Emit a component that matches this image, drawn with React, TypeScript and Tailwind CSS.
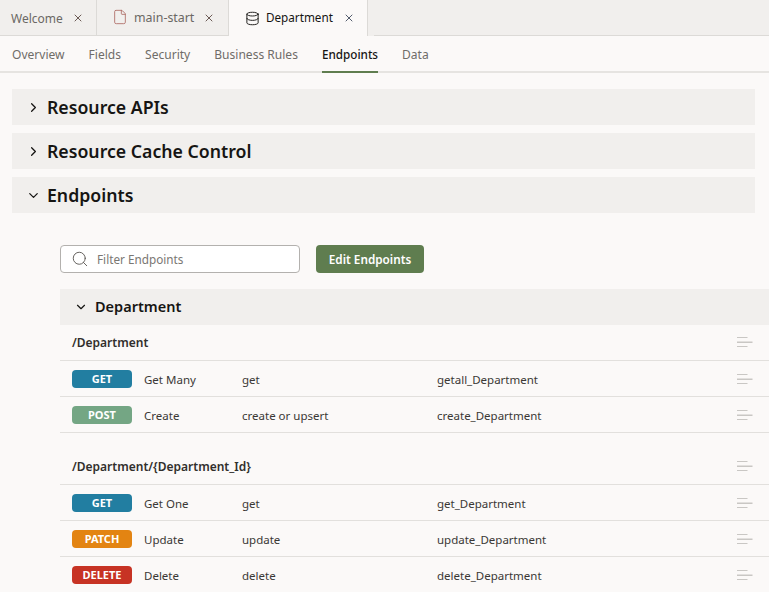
import React from 'react';
import { ChevronRight, ChevronDown, Search, X, Database, File } from 'lucide-react';

const subTabs = ['Overview', 'Fields', 'Security', 'Business Rules', 'Endpoints', 'Data'];

const badgeColors: Record<string, string> = {
  GET: 'bg-[#227ea1]',
  POST: 'bg-[#74a684]',
  PATCH: 'bg-[#e38412]',
  DELETE: 'bg-[#c73324]',
};

const groups = [
  {
    path: '/Department',
    rows: [
      { method: 'GET', label: 'Get Many', action: 'get', name: 'getall_Department' },
      { method: 'POST', label: 'Create', action: 'create or upsert', name: 'create_Department' },
    ],
  },
  {
    path: '/Department/{Department_Id}',
    rows: [
      { method: 'GET', label: 'Get One', action: 'get', name: 'get_Department' },
      { method: 'PATCH', label: 'Update', action: 'update', name: 'update_Department' },
      { method: 'DELETE', label: 'Delete', action: 'delete', name: 'delete_Department' },
    ],
  },
];

const MenuLines = ({ className = '' }: { className?: string }) => (
  <svg width="16" height="11" viewBox="0 0 16 11" className={`shrink-0 text-[#c9c7c4] ${className}`}>
    <rect x="0" y="0" width="10.5" height="1" fill="currentColor" />
    <rect x="0" y="4.5" width="15.5" height="1.5" fill="currentColor" />
    <rect x="0" y="9" width="10.5" height="1" fill="currentColor" />
  </svg>
);

const Section = ({ title, open }: { title: string; open?: boolean }) => (
  <div className="flex h-9 items-center bg-[#f1efed]">
    <div className="flex w-[35px] justify-end pr-[6px]">
      {open ? <ChevronDown size={15} strokeWidth={2} className="text-[#161513]" /> : <ChevronRight size={15} strokeWidth={2} className="text-[#161513]" />}
    </div>
    <span className="text-[17.7px] font-semibold text-[#161513]">{title}</span>
  </div>
);

export default function App() {
  return (
    <div className="h-[592px] w-[769px] overflow-hidden bg-[#fbf9f8] font-['Noto_Sans',sans-serif] text-[11.5px] text-[#3a3835]">
      <div className="flex h-9 bg-[#f1efed]">
        <div className="flex w-[97px] items-center border-r border-b border-[#dcdad7] pt-[3px] pl-[11px] text-[12px] text-[#6b6864]">
          Welcome
          <X size={12} strokeWidth={1.8} className="ml-[9px] -mt-[3px] text-[#5c4a44]" />
        </div>
        <div className="flex w-[131px] items-center border-b border-[#dcdad7] pt-px pl-[15px] text-[12.4px] text-[#6b6864]">
          <File size={16} strokeWidth={1.2} className="mr-[6px] -mt-[3px] text-[#a8615a]" />
          main-start
          <X size={12} strokeWidth={1.8} className="ml-[9px] text-[#5c4a44]" />
        </div>
        <div className="flex w-[140px] items-center border-x border-[#dcdad7] bg-[#fbf9f8] pl-[16px] text-[11.7px] text-[#161513]">
          <Database size={15} strokeWidth={1.5} className="mr-[6px]" />
          Department
          <X size={12} strokeWidth={1.8} className="ml-[10px] text-[#3f4a5c]" />
        </div>
        <div className="w-[6px]" />
        <div className="flex-1 border-b border-[#dcdad7]" />
      </div>

      <div className="flex h-[37px] gap-6 border-b-2 border-[#e6e4e1] px-3">
        {subTabs.map((t) => (
          <div
            key={t}
            className={
              t === 'Endpoints'
                ? 'flex h-[37px] items-center border-b-2 border-[#5f7d4f] pt-0.5 text-[11.7px] font-medium text-[#161513]'
                : 'flex h-[37px] items-center pt-px text-[12.05px] text-[#6f6c68]'
            }
          >
            {t}
          </div>
        ))}
      </div>

      <div className="box-content flex w-[743px] flex-col gap-2 pt-4 pl-3">
        <Section title="Resource APIs" />
        <Section title="Resource Cache Control" />
        <Section title="Endpoints" open />
      </div>

      <div className="pt-8 pl-[60px]">
        <div className="flex items-center gap-4">
          <div className="flex h-7 w-60 items-center rounded border border-[#b3b1ae] bg-white pl-[10px] text-[11.75px] text-[#7a7773]">
            <Search size={18} strokeWidth={1.2} className="mr-[8px] text-[#57544f]" />
            <span className="pt-px">Filter Endpoints</span>
          </div>
          <div className="flex h-7 w-[108px] items-center justify-center rounded bg-[#5f7d4f] pt-px text-[11.75px] font-semibold text-white">
            Edit Endpoints
          </div>
        </div>

        <div className="mt-4 flex h-9 items-center bg-[#f1efed] pl-[14px]">
          <ChevronDown size={14} strokeWidth={2} className="mr-[7px] text-[#161513]" />
          <span className="-mt-px text-[14.5px] font-semibold text-[#161513]">Department</span>
        </div>

        {groups.map((g, i) => (
          <div key={g.path} className={i > 0 ? 'mt-4' : ''}>
            <div className="flex h-9 items-center justify-between border-b border-[#e2e0dd] pr-4 pl-3">
              <span className="text-[12px] font-semibold text-[#312f2c]">{g.path}</span>
              <MenuLines />
            </div>
            {g.rows.map((r) => (
              <div key={r.method + r.name} className="flex h-9 items-center border-b border-[#e2e0dd] pr-4 pl-3">
                <span className={`flex h-[18px] w-[60px] items-center justify-center rounded pt-px text-[11px] font-bold text-white ${badgeColors[r.method]}`}>
                  {r.method}
                </span>
                <span className="ml-3 w-[98px] pt-0.5">{r.label}</span>
                <span className="w-[195px] pt-0.5">{r.action}</span>
                <span className="flex-1 pt-0.5">{r.name}</span>
                <MenuLines className="mt-0.5" />
              </div>
            ))}
          </div>
        ))}
      </div>
    </div>
  );
}
